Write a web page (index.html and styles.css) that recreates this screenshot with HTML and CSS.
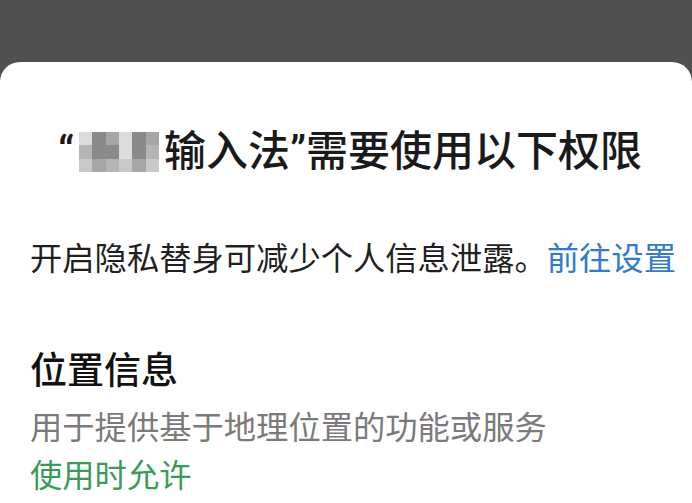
FILE: index.html
```html
<!DOCTYPE html>
<html lang="zh-CN">
<head>
  <meta charset="UTF-8">
  <meta name="viewport" content="width=device-width, initial-scale=1.0">
  <title>权限</title>
  <link rel="stylesheet" href="styles.css">
</head>
<body>
  <div class="sheet">
    <h1 class="title">“<span class="mosaic"><i></i><i></i><i></i><i></i><i></i><i></i><i></i><i></i><i></i><i></i><i></i><i></i><i></i><i></i><i></i><i></i><i></i><i></i></span>输入法”需要使用以下权限</h1>
    <p class="notice">开启隐私替身可减少个人信息泄露。<a class="link" href="#">前往设置</a></p>

    <div class="perm">
      <h2 class="perm-name">位置信息</h2>
      <p class="perm-desc">用于提供基于地理位置的功能或服务</p>
      <p class="perm-state">使用时允许</p>
    </div>
  </div>
</body>
</html>
```

FILE: styles.css
```css
html, body { margin: 0; height: 100%; }
body { background: #505050; font-family: Roboto, "Noto Sans CJK SC", sans-serif; color: #1f1f1f; overflow: hidden; }
.sheet { margin-top: 62px; min-height: calc(100% - 62px); background: #fff; border-radius: 20px 20px 0 0; padding: 64px 0 0 30px; box-sizing: border-box; }
.title { margin: 0 0 59px -22px; text-align: center; font-size: 42px; line-height: 52px; font-weight: 500; color: #1a1a1a; white-space: nowrap; }
.mosaic { display: inline-block; width: 80px; height: 40px; overflow: hidden; white-space: normal; font-size: 0; line-height: 0; vertical-align: -6px; margin: 0 5px 0 5px; }
.mosaic i { display: inline-block; width: 13.33px; height: 13.33px; background: #c9c9c9; }
.mosaic i:nth-child(2), .mosaic i:nth-child(5), .mosaic i:nth-child(8), .mosaic i:nth-child(9), .mosaic i:nth-child(11) { background: #8a8a8a; }
.mosaic i:nth-child(3), .mosaic i:nth-child(6), .mosaic i:nth-child(14), .mosaic i:nth-child(17) { background: #a6a6a6; }
.mosaic i:nth-child(7), .mosaic i:nth-child(12), .mosaic i:nth-child(15) { background: #b5b5b5; }
.mosaic i:nth-child(1), .mosaic i:nth-child(4), .mosaic i:nth-child(10) { background: #dcdcdc; }
.notice { margin: 0 0 67px; font-size: 32.3px; line-height: 44px; color: #1f1f1f; white-space: nowrap; }
.link { color: #2f7bcf; text-decoration: none; }
.perm-name { margin: 0 0 10px; font-size: 37px; line-height: 48px; font-weight: 500; color: #111; }
.perm-desc { margin: 0 0 4px; font-size: 32.3px; line-height: 44px; color: #7a7a7a; }
.perm-state { margin: 0; font-size: 32.3px; line-height: 44px; color: #3a9a57; }
```
